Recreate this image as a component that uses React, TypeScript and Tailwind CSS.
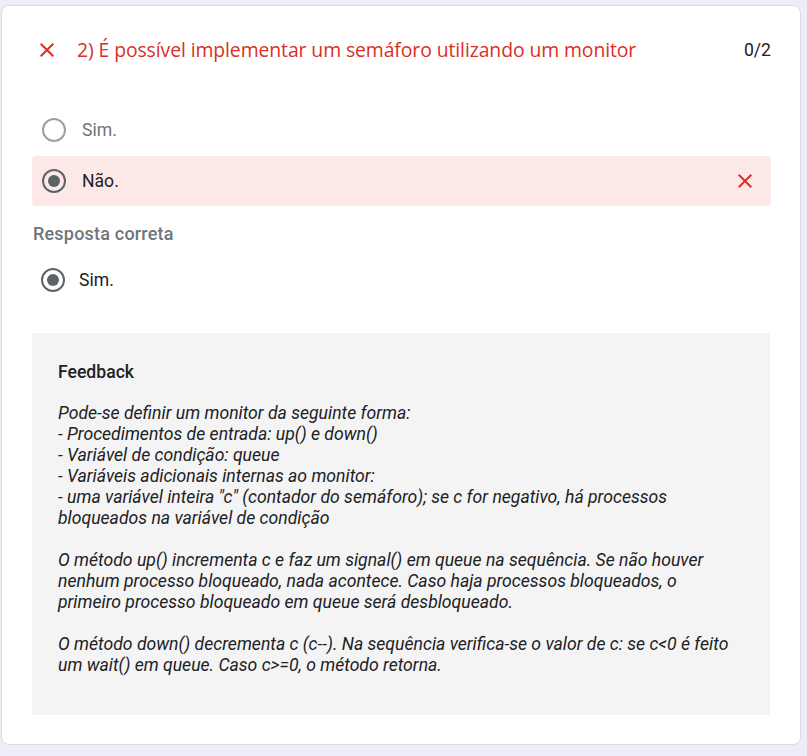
const CloseIcon = ({ className }: { className?: string }) => (
  <svg viewBox="0 0 24 24" className={className} fill="currentColor">
    <path d="M19 6.41L17.59 5 12 10.59 6.41 5 5 6.41 10.59 12 5 17.59 6.41 19 12 13.41 17.59 19 19 17.59 13.41 12z" />
  </svg>
);

const Radio = ({ checked }: { checked?: boolean }) => (
  <div
    className={`w-6 h-6 rounded-full border-[2.5px] flex items-center justify-center shrink-0 ${
      checked ? "border-[#5f6368]" : "border-[#9aa0a6]"
    }`}
  >
    {checked && <div className="w-3 h-3 rounded-full bg-[#5f6368]" />}
  </div>
);

const feedback = [
  "Pode-se definir um monitor da seguinte forma:",
  "- Procedimentos de entrada: up() e down()",
  "- Variável de condição: queue",
  "- Variáveis adicionais internas ao monitor:",
  '- uma variável inteira "c" (contador do semáforo); se c for negativo, há processos',
  "bloqueados na variável de condição",
  "",
  "O método up() incrementa c e faz um signal() em queue na sequência. Se não houver",
  "nenhum processo bloqueado, nada acontece. Caso haja processos bloqueados, o",
  "primeiro processo bloqueado em queue será desbloqueado.",
  "",
  "O método down() decrementa c (c--). Na sequência verifica-se o valor de c: se c<0 é feito",
  "um wait() em queue. Caso c>=0, o método retorna.",
];

export default function App() {
  return (
    <div className="min-h-[756px] bg-[#f0ebf8] pt-[5px] pl-px font-['Roboto',sans-serif]">
      <div className="w-[800px] bg-white border border-[#dadce0] rounded-lg pt-[20px] pb-[29px] pl-[30px] pr-[29px]">
        <div className="h-12 flex items-center">
          <CloseIcon className="w-6 h-6 text-[#d93025] ml-[3px]" />
          <span className="ml-[18px] text-[19.4px] text-[#d93025] font-['Open_Sans',sans-serif] tracking-[-0.1px]">
            2) É possível implementar um semáforo utilizando um monitor
          </span>
          <span className="ml-auto text-[17.6px] text-[#202124]">0/2</span>
        </div>

        <div className="mt-[31px] h-[50px] flex items-center pl-[10px]">
          <Radio />
          <span className="ml-[16px] text-[17.6px] text-[#70757a]">Sim.</span>
        </div>
        <div className="mt-px h-[50px] flex items-center pl-[10px] pr-[14px] bg-[#fce8e6] rounded">
          <Radio checked />
          <span className="ml-[16px] text-[17.6px] text-[#202124]">Não.</span>
          <CloseIcon className="w-6 h-6 text-[#d93025] ml-auto" />
        </div>

        <div className="mt-[15px] h-6 flex items-center pl-px text-[18px] text-[#70757a] font-medium tracking-[0.2px]">
          Resposta correta
        </div>

        <div className="mt-[17px] h-9 flex items-center pl-[9px]">
          <Radio checked />
          <span className="ml-[14px] text-[17.6px] text-[#202124]">Sim.</span>
        </div>

        <div className="mt-[35px] mr-px h-[382px] bg-[#f4f4f4] pt-[27px] px-[26px]">
          <div className="h-6 flex items-center text-[17.6px] font-medium text-[#202124]">Feedback</div>
          <div className="mt-[19px] text-[17.6px] italic leading-[21px] text-[#202124]">
            {feedback.map((line, i) => (
              <div key={i} className="h-[21px] whitespace-nowrap">
                {line}
              </div>
            ))}
          </div>
        </div>
      </div>
    </div>
  );
}
